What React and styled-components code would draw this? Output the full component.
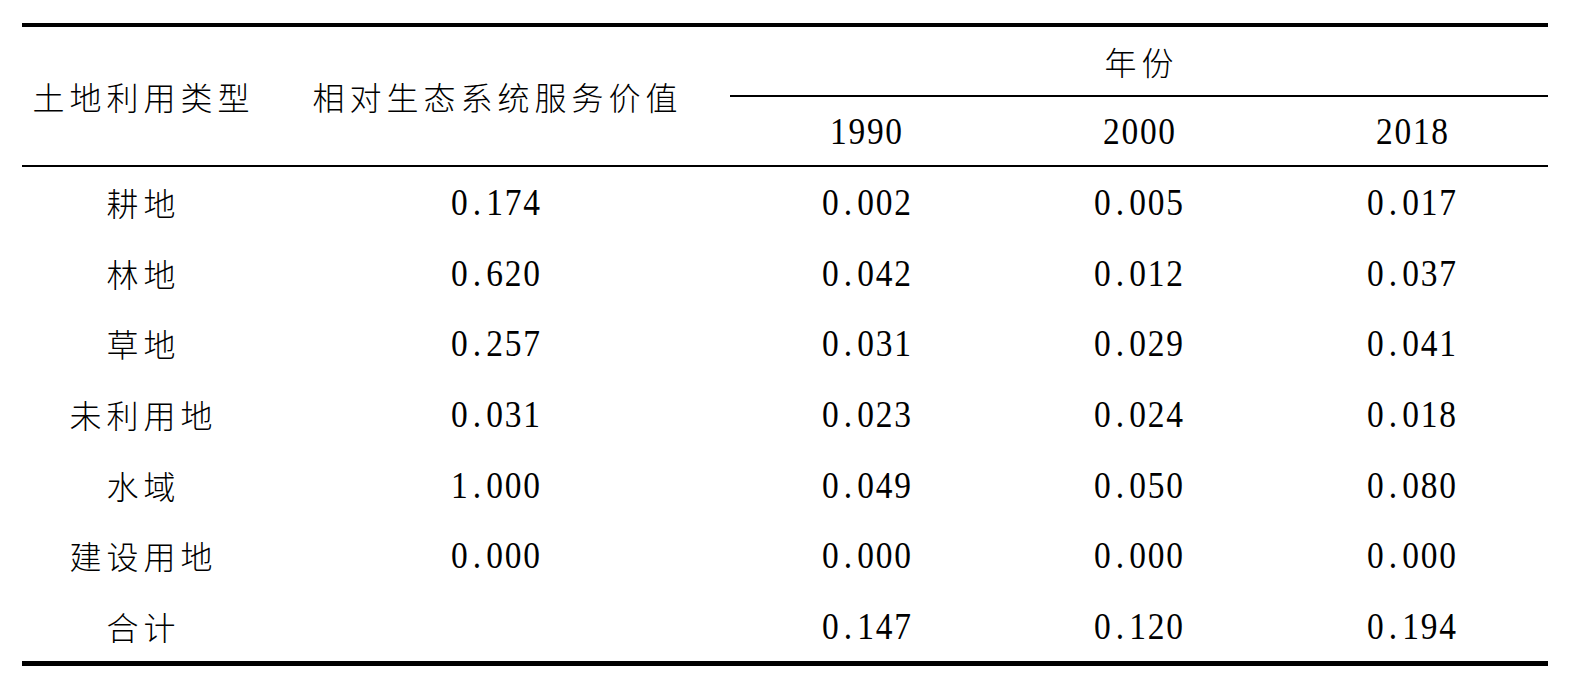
import React from "react";
import styled, { createGlobalStyle } from "styled-components";

// 土地利用类型 / 相对生态系统服务价值 / 年份 (1990, 2000, 2018)
const COLUMNS = "238px 470px repeat(3, 1fr)";

const years = ["1990", "2000", "2018"];

const rows = [
  { type: "耕地", rel: "0.174", values: ["0.002", "0.005", "0.017"] },
  { type: "林地", rel: "0.620", values: ["0.042", "0.012", "0.037"] },
  { type: "草地", rel: "0.257", values: ["0.031", "0.029", "0.041"] },
  { type: "未利用地", rel: "0.031", values: ["0.023", "0.024", "0.018"] },
  { type: "水域", rel: "1.000", values: ["0.049", "0.050", "0.080"] },
  { type: "建设用地", rel: "0.000", values: ["0.000", "0.000", "0.000"] },
  { type: "合计", rel: "", values: ["0.147", "0.120", "0.194"] },
];

const GlobalStyle = createGlobalStyle`
  html, body {
    margin: 0;
    padding: 0;
    background: #fff;
  }
  body {
    color: #000;
  }
`;

function Value({ text }) {
  if (!text) return null;
  const [int, frac] = text.split(".");
  return (
    <Num>
      {int}
      {frac !== undefined && <Dot>.</Dot>}
      {frac}
    </Num>
  );
}

function App() {
  return (
    <Page>
      <GlobalStyle />
      <Table>
        <Head>
          <HeadLabel>
            <Han>土地利用类型</Han>
          </HeadLabel>
          <HeadLabel>
            <Han>相对生态系统服务价值</Han>
          </HeadLabel>
          <GroupTitle>
            <Han>年份</Han>
          </GroupTitle>
          {years.map((y) => (
            <Cell key={y}>
              <Num>{y}</Num>
            </Cell>
          ))}
        </Head>
        {rows.map((r) => (
          <Row key={r.type}>
            <Cell>
              <Han>{r.type}</Han>
            </Cell>
            <Cell>
              <Value text={r.rel} />
            </Cell>
            {r.values.map((v, i) => (
              <Cell key={i}>
                <Value text={v} />
              </Cell>
            ))}
          </Row>
        ))}
      </Table>
    </Page>
  );
}

const Page = styled.div`
  padding: 23px 29px 0 22px;
`;
const Table = styled.div`
  width: 1526px;
  border-top: 4px solid #000;
  border-bottom: 5px solid #000;
`;
const Head = styled.div`
  display: grid;
  grid-template-columns: ${COLUMNS};
  grid-template-rows: 70px 68px;
  border-bottom: 2px solid #000;
`;
const Cell = styled.div`
  display: flex;
  align-items: center;
  justify-content: center;
`;
const HeadLabel = styled(Cell)`
  grid-row: 1 / span 2;
`;
const GroupTitle = styled(Cell)`
  grid-column: 3 / span 3;
  box-sizing: border-box;
  border-bottom: 2px solid #000;
`;
const Row = styled.div`
  display: grid;
  grid-template-columns: ${COLUMNS};
  height: calc(494px / 7);
`;
const Han = styled.span`
  font-family: "Noto Sans CJK SC", sans-serif;
  font-size: 32px;
  font-weight: 300;
  letter-spacing: 5px;
  padding-left: 5px;
  line-height: 1;
`;
const Num = styled.span`
  display: inline-block;
  font-family: "Liberation Serif", serif;
  font-size: 38px;
  line-height: 1;
  letter-spacing: 2px;
  padding-left: 2px;
  transform: scaleX(0.88);
`;
const Dot = styled.span`
  display: inline-block;
  width: 0.5em;
  text-align: center;
`;

export default App;
